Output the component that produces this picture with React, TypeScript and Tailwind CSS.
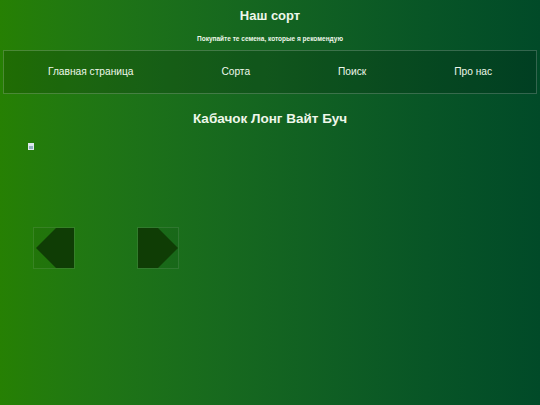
import React from "react";

export default function App() {
  return (
    <div
      className="min-h-[405px] w-full bg-gradient-to-r from-[#268003] to-[#014a28] text-[#eef7ea]"
      style={{ fontFamily: '"Liberation Sans", Arial, sans-serif' }}
    >
      <div className="pt-[7px] text-center">
        <h1 className="text-[13px] font-bold leading-[18px]">Наш сорт</h1>
        <p className="mt-[9px] text-[6.5px] font-bold leading-[9px]">
          Покупайте те семена, которые я рекомендую
        </p>
      </div>
      <nav className="mx-[3px] mt-[7px] flex h-[44px] items-center justify-around border border-white/20 bg-black/15 text-[10.2px]">
        <span>Главная страница</span>
        <span>Сорта</span>
        <span>Поиск</span>
        <span>Про нас</span>
      </nav>
      <h2 className="mt-[16px] text-center text-[13.5px] font-bold leading-[18px]">
        Кабачок Лонг Вайт Буч
      </h2>
      <div className="ml-[28px] mt-[15px] h-[8px] w-[7px]">
        <svg width="7" height="8" viewBox="0 0 7 8">
          <rect x="0" y="0" width="6" height="7" fill="#dfe9ee" />
          <rect x="1" y="3" width="4" height="3" fill="#8fb1bd" />
        </svg>
      </div>
      <div className="ml-[33px] mt-[76px] flex gap-[62px]">
        <button className="relative h-[42px] w-[42px] border border-white/10 bg-black/5">
          <svg className="absolute inset-0" width="40" height="40" viewBox="0 0 40 40">
            <polygon points="2,20 22,0 40,0 40,40 22,40" fill="#0f3d05" />
          </svg>
        </button>
        <button className="relative h-[42px] w-[42px] border border-white/10 bg-black/5">
          <svg className="absolute inset-0" width="40" height="40" viewBox="0 0 40 40">
            <polygon points="0,0 20,0 40,20 20,40 0,40" fill="#0f3d05" />
          </svg>
        </button>
      </div>
    </div>
  );
}
